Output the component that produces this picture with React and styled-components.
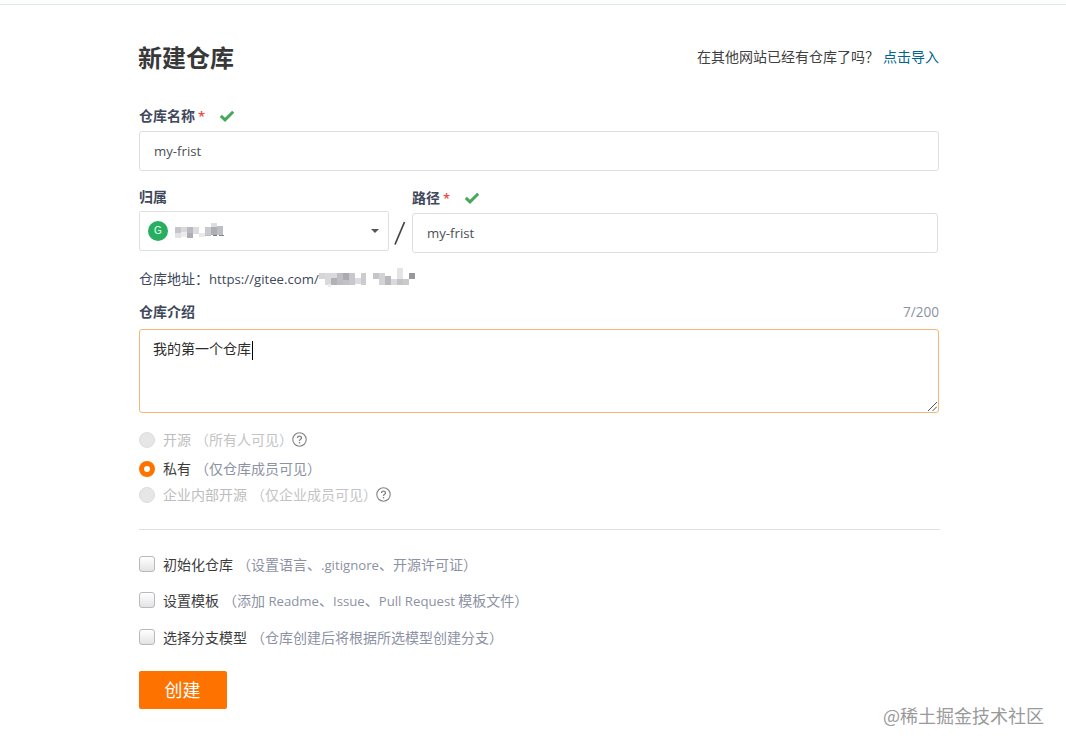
import styled, { createGlobalStyle } from 'styled-components';

const GlobalStyle = createGlobalStyle`
    * {
        box-sizing: border-box;
    }

    body {
        margin: 0;
        background: #fff;
        color: #40485b;
        font-family: "Open Sans", "Noto Sans CJK SC", sans-serif;
        font-size: 14px;
        line-height: 22px;
    }
`;

const Page = styled.div`
    position: relative;
    height: 747px;
    overflow: hidden;
`;

const TopBar = styled.div`
    height: 5px;
    background: #fcfefe;
    border-bottom: 1px solid #e2e7e7;
`;

const Form = styled.form`
    width: 801px;
    margin: 0 0 0 139px;
    padding-top: 37px;
`;

const Header = styled.header`
    display: flex;
    align-items: center;
    justify-content: space-between;
    width: 800px;
    height: 32px;
`;

const Title = styled.h2`
    margin: 0 0 0 -1px;
    font-size: 24px;
    line-height: 32px;
    color: #383838;
`;

const ImportTip = styled.div`
    margin-bottom: 2px;
    color: #404040;
`;

const ImportLink = styled.a`
    margin-left: 4px;
    color: #00648c;
    text-decoration: none;
`;

const Latin = styled.span`
    font-size: 13.2px;
`;

const Field = styled.div`
    width: ${(props) => props.$width}px;
    margin-top: ${(props) => props.$top}px;
`;

const LabelRow = styled.div`
    display: flex;
    align-items: center;
    height: 22px;
    margin-bottom: ${(props) => props.$gap}px;
`;

const Label = styled.label`
    font-weight: 700;
`;

const Required = styled.span`
    margin: 0 14px 0 3px;
    color: #f0483e;
    font-size: 13px;
    font-weight: 600;
`;

const Counter = styled.span`
    margin-left: auto;
    color: #8c92a4;
    font-size: 13.6px;
`;

const Input = styled.input`
    display: block;
    width: 100%;
    height: 40px;
    padding: 0 14px;
    border: 1px solid #dddedf;
    border-radius: 3px;
    outline: none;
    color: #4c4f56;
    font-family: inherit;
    font-size: 13.2px;
`;

const PathRow = styled.div`
    display: flex;
    align-items: flex-start;
`;

const Select = styled.div`
    display: flex;
    align-items: center;
    width: 250px;
    height: 40px;
    padding: 0 9px 0 8px;
    border: 1px solid #dde1e6;
    border-radius: 2px;
`;

const Avatar = styled.span`
    width: 20px;
    height: 20px;
    margin-right: 7px;
    border-radius: 50%;
    background: #27ae60;
    color: #e8fff0;
    font-family: "Liberation Sans", sans-serif;
    font-size: 10px;
    line-height: 20px;
    text-align: center;
`;

const Caret = styled.span`
    margin-left: auto;
    border: 4px solid transparent;
    border-top-color: #555;
    border-bottom: 0;
`;

const Slash = styled.svg`
    flex: none;
    width: 23px;
    height: 24px;
    margin-top: 50px;
`;

const Address = styled.div`
    display: flex;
    height: 22px;
    margin-top: 15px;
`;

const Textarea = styled.div`
    position: relative;
    height: 84px;
    padding: 8px 13px;
    border: 1px solid #f5b775;
    border-radius: 3px;
    color: #2c2c2c;
`;

const Cursor = styled.span`
    display: inline-block;
    width: 1px;
    height: 19px;
    margin-left: 1px;
    background: #000;
    vertical-align: middle;
`;

const Grip = styled.svg`
    position: absolute;
    right: 1px;
    bottom: 1px;
`;

const Option = styled.div`
    display: flex;
    align-items: center;
    height: 24px;
    margin-top: ${(props) => props.$top}px;
    color: ${(props) => (props.$disabled ? '#bdbdbd' : '#3c3c3c')};
`;

const Radio = styled.span`
    width: 16px;
    height: 16px;
    margin-right: 8px;
    border: ${(props) => (props.$checked ? '5px solid #fe7300' : '1px solid #dcdcdc')};
    border-radius: 50%;
    background: ${(props) => (props.$checked ? '#fff' : '#e6e6e6')};
`;

const Checkbox = styled.span`
    width: 16px;
    height: 16px;
    margin: 0 8px 2px 0;
    border: 1px solid #b9b9bb;
    border-radius: 3px;
    background: linear-gradient(#fff, #e3e3e5);
`;

const Hint = styled.span`
    margin-left: 4px;
    color: ${(props) => (props.$disabled ? '#c4c4c4' : '#8c92a4')};
    white-space: pre;
`;

const Divider = styled.div`
    height: 1px;
    margin: 22px 0 23px;
    background: #dfe1e4;
`;

const Submit = styled.button`
    display: block;
    width: 88px;
    height: 38px;
    margin-top: 21px;
    padding: 0 1px 2px 0;
    border: 0;
    border-radius: 2px;
    background: #fe7300;
    color: #fff;
    font-family: inherit;
    font-size: 18px;
`;

const Watermark = styled.div`
    position: absolute;
    right: 22px;
    bottom: 21px;
    color: #9a9a9a;
    font-family: "Noto Sans CJK SC", sans-serif;
    font-size: 18px;
`;

const HelpIcon = styled.svg`
    width: 15px;
    height: 15px;
    margin: 0 0 2px -1px;
`;

const Check = () => (
    <svg width="16" height="12" viewBox="0 0 16 12">
        <path d="M1.8 5.8 L6 9.8 L14.2 1.8" fill="none" stroke="#45a959" strokeWidth="3" />
    </svg>
);

const Help = () => (
    <HelpIcon viewBox="0 0 15 15" fill="none" stroke="#858585">
        <circle cx="7.5" cy="7.5" r="6.7" strokeWidth="1.1" />
        <path d="M5.5 5.9 C5.5 3.4 9.5 3.5 9.5 5.9 C9.5 7.3 7.5 7.2 7.5 8.9" strokeWidth="1.3" />
        <path d="M7.5 10v1.4" strokeWidth="1.4" />
    </HelpIcon>
);

// x, y, width, height, colour of every block of a masked name
const ownerBlocks = [
    [0, 4, 6, 6, '#c5c5ca'], [0, 10, 6, 5, '#e3e3e6'], [6, 4, 6, 5, '#d9d9dc'], [6, 9, 6, 5, '#ececee'],
    [12, 4, 6, 6, '#b9b9c0'], [12, 10, 6, 5, '#adadb5'], [18, 4, 6, 7, '#dcdce0'], [24, 10, 6, 4, '#e9e9eb'],
    [30, 4, 6, 8, '#c9c9cf'], [36, 0, 6, 4, '#dddde1'], [36, 4, 6, 8, '#adadb4'], [42, 3, 6, 9, '#bdbdc5'],
    [30, 12, 6, 1, '#bcbcc0'], [38, 12, 4, 1, '#777'], [44, 12, 5, 1, '#888'],
];

const addressBlocks = [
    [0, 5, 6, 6, '#d6d6d8'], [6, 5, 6, 12, '#d9d9dc'], [9, 16, 3, 3, '#ebebed'], [12, 10, 6, 7, '#b1b1b7'],
    [12, 5, 6, 5, '#dadade'], [18, 5, 6, 12, '#bdbdc2'], [24, 5, 6, 7, '#aaaab0'], [24, 12, 6, 5, '#c1c1c6'],
    [30, 5, 6, 12, '#c8c8cc'], [36, 10, 6, 6, '#dcdce0'], [42, 5, 5, 12, '#cccccf'],
    [54, 5, 6, 6, '#c6c6ca'], [60, 5, 6, 12, '#d3d3d6'], [66, 8, 6, 9, '#b8b8bd'], [72, 11, 6, 6, '#dadade'],
    [78, 0, 6, 11, '#e4e4e6'], [78, 11, 6, 6, '#c3c3c8'], [84, 11, 6, 6, '#cacace'], [90, 5, 6, 6, '#98989d'],
];

const Mosaic = ({ blocks, width, height }) => (
    <svg width={width} height={height}>
        {blocks.map(([x, y, w, h, fill]) => (
            <rect key={`${x}-${y}`} x={x} y={y} width={w} height={h} fill={fill} />
        ))}
    </svg>
);

const App = () => {
  return (
    <>
        <GlobalStyle />
        <Page>
            <TopBar />
            <Form>
                <Header>
                    <Title>新建仓库</Title>
                    <ImportTip>
                        在其他网站已经有仓库了吗？
                        <ImportLink>点击导入</ImportLink>
                    </ImportTip>
                </Header>

                <Field $width={800} $top={31}>
                    <LabelRow $gap={4}>
                        <Label>仓库名称</Label>
                        <Required>*</Required>
                        <Check />
                    </LabelRow>
                    <Input defaultValue="my-frist" />
                </Field>

                <PathRow>
                    <Field $width={250} $top={15}>
                        <LabelRow $gap={3}>
                            <Label>归属</Label>
                        </LabelRow>
                        <Select>
                            <Avatar>G</Avatar>
                            <Mosaic blocks={ownerBlocks} width={50} height={17} />
                            <Caret />
                        </Select>
                    </Field>
                    <Slash viewBox="0 0 23 24">
                        <path d="M6 23.5 L15.5 1" stroke="#444" strokeWidth="1.7" />
                    </Slash>
                    <Field $width={526} $top={16}>
                        <LabelRow $gap={4}>
                            <Label>路径</Label>
                            <Required>*</Required>
                            <Check />
                        </LabelRow>
                        <Input defaultValue="my-frist" />
                    </Field>
                </PathRow>

                <Address>
                    仓库地址：<Latin>https://gitee.com/</Latin>
                    <Mosaic blocks={addressBlocks} width={98} height={22} />
                </Address>

                <Field $width={800} $top={11}>
                    <LabelRow $gap={6}>
                        <Label>仓库介绍</Label>
                        <Counter>7/200</Counter>
                    </LabelRow>
                    <Textarea>
                        我的第一个仓库<Cursor />
                        <Grip width="9" height="9" viewBox="0 0 9 9" stroke="#555">
                            <path d="M0 9 L9 0 M4.5 9 L9 4.5" />
                        </Grip>
                    </Textarea>
                </Field>

                <Option $top={15} $disabled>
                    <Radio />
                    开源<Hint $disabled>（所有人可见）</Hint>
                    <Help />
                </Option>
                <Option $top={5}>
                    <Radio $checked />
                    私有<Hint>（仅仓库成员可见）</Hint>
                </Option>
                <Option $top={2} $disabled>
                    <Radio />
                    企业内部开源<Hint $disabled>（仅企业成员可见）</Hint>
                    <Help />
                </Option>

                <Divider />

                <Option $top={0}>
                    <Checkbox />
                    初始化仓库<Hint>（设置语言、<Latin>.gitignore</Latin>、开源许可证）</Hint>
                </Option>
                <Option $top={12}>
                    <Checkbox />
                    设置模板
                    <Hint>（添加<Latin> Readme</Latin>、<Latin>Issue</Latin>、<Latin>Pull Request </Latin>模板文件）</Hint>
                </Option>
                <Option $top={13}>
                    <Checkbox />
                    选择分支模型<Hint>（仓库创建后将根据所选模型创建分支）</Hint>
                </Option>

                <Submit type="button">创建</Submit>
            </Form>
            <Watermark>@稀土掘金技术社区</Watermark>
        </Page>
    </>
  )
}

export default App
